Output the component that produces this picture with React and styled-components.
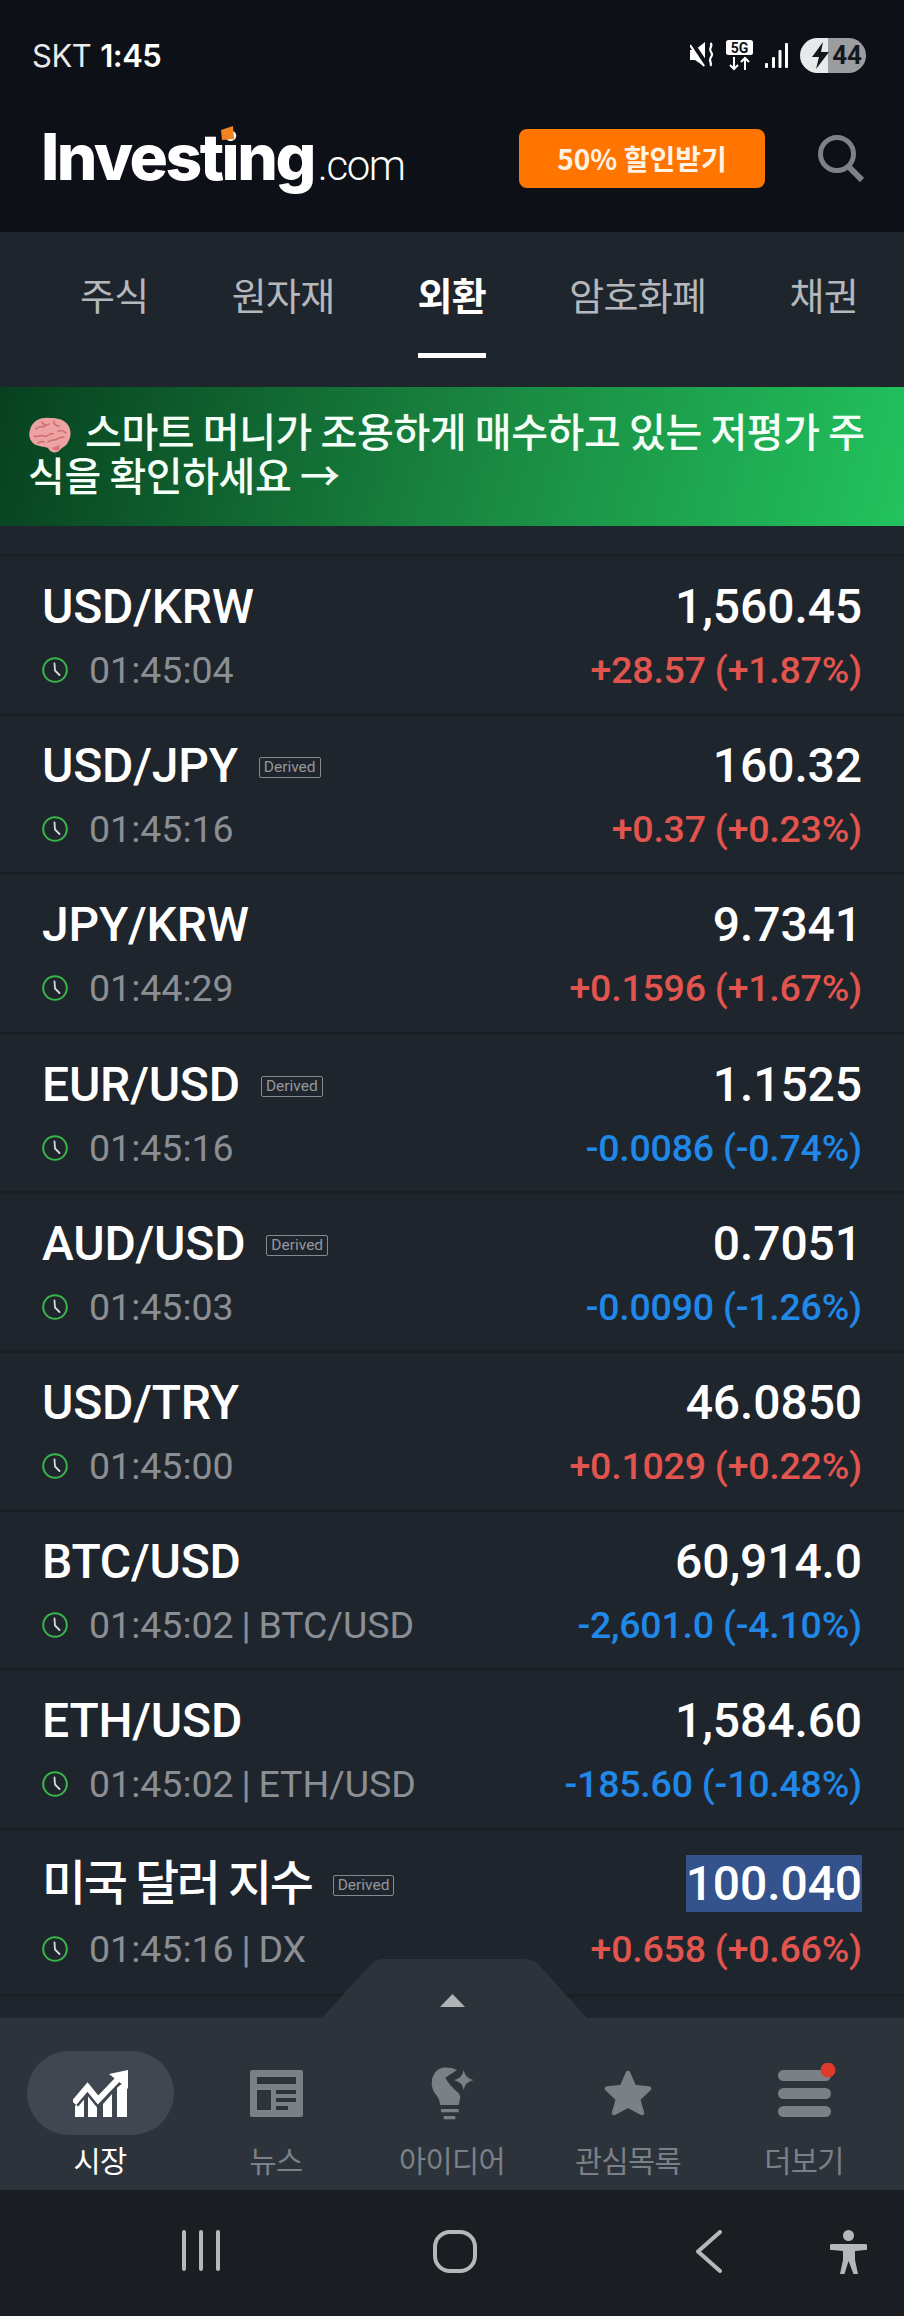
import React from "react";
import styled, { createGlobalStyle } from "styled-components";

const Global = createGlobalStyle`
  html, body { margin: 0; padding: 0; background: #1f252d; }
  * { box-sizing: border-box; }
`;
const SANS = `Roboto, "Noto Sans CJK KR", sans-serif`;
const KR = `"Noto Sans CJK KR", Roboto, sans-serif`;

const Page = styled.div`
  width: 904px; height: 2316px; display: flex; flex-direction: column;
  overflow: hidden; background: #1f252d; font-family: ${SANS}; color: #fff;
`;
const Top = styled.div`background: #0d1117; flex: none;`;
const StatusBar = styled.div`
  height: 100px; padding: 10px 38px 0 32px; display: flex; align-items: center; justify-content: space-between;
`;
const Carrier = styled.div`
  font: 400 31px/1 "Inter", sans-serif; color: #e9e9e9; letter-spacing: -0.5px;
  b { font-weight: 600; color: #fff; margin-left: 9px; }
`;
const StatusIcons = styled.div`display: flex; align-items: center; gap: 12px;`;
const Battery = styled.div`
  width: 66px; height: 35px; border-radius: 18px; display: flex; align-items: center; justify-content: flex-end;
  padding-right: 4px; gap: 1px;
  background: linear-gradient(90deg, #e8e9ea 0 28px, #9b9da0 28px);
  color: #14181d; font: 700 26px/1 "Roboto", sans-serif; 
`;
const Header = styled.div`
  height: 132px; padding: 0 40px 16px 41px; display: flex; align-items: center; position: relative;
`;
const Logo = styled.div`
  position: relative; display: flex; align-items: baseline; height: 70px; margin: -3px auto 0 0;
`;
const LogoMain = styled.span`
  font: 800 64px/70px Inter, sans-serif; letter-spacing: -2.5px; color: #fff;
`;
const LogoCom = styled.span`
  font: 300 42px/70px Roboto, sans-serif; letter-spacing: -1.4px; color: #fff; margin-left: 4px;
`;
const LogoMark = styled.svg`position: absolute; left: 180px; top: 4px;`;
const Promo = styled.div`
  width: 246px; height: 59px; border-radius: 8px; background: #ff7500; color: #fff3e6;
  display: flex; align-items: center; justify-content: center; font: 700 28px/1 ${KR}; margin-right: 53px;
`;
const Tabs = styled.div`
  flex: none; height: 155px; display: flex; gap: 83px; padding-left: 80px; white-space: nowrap; overflow: hidden;
`;
const Tab = styled.div`
  height: 126px; padding-top: 39px; font: ${p => (p.$active ? 700 : 400)} 38px/46px ${KR};
  letter-spacing: -0.65px; color: ${p => (p.$active ? "#fff" : "#b4b8bc")};
  border-bottom: 5px solid ${p => (p.$active ? "#fff" : "transparent")};
`;
const Banner = styled.div`
  flex: none; height: 139px; padding: 22px 30px 0 28px;
  background: linear-gradient(105deg, #07401f 0%, #1a8a42 55%, #22c35e 100%);
  font: 500 40px/43px ${KR}; letter-spacing: -0.4px; color: #f4fff7;
`;
const Brain = styled.svg`vertical-align: -6px; margin-right: 13px;`;
const List = styled.div`flex: 1; min-height: 0; padding-top: 28px;`;
const Row = styled.div`
  height: ${p => (p.$tall ? 169 : 159.2)}px; border-top: 3px solid #1a1f25; padding: ${p => (p.$tall ? 23 : 20)}px 42px 0 42px;
  ${p => p.$tall && "border-bottom: 3px solid #1a1f25;"}
`;
const Line = styled.div`display: flex; justify-content: space-between; align-items: center;`;
const TitleWrap = styled.div`display: flex; align-items: center; gap: ${p => (p.$tall ? 21 : 21)}px;`;
const Title = styled.div`
  font: 500 48px/60px ${SANS}; letter-spacing: ${p => (p.$tall ? -2.4 : -0.2)}px; color: #fff;
`;
const Badge = styled.div`
  border: 1.5px solid #868a90; border-radius: 2px; font: 400 15.5px/18px Roboto, sans-serif; color: #93979c;
  padding: 0 4px; height: 21px; margin-top: 3px;
`;
const Value = styled.div`
  font: 500 48px/${p => (p.$sel ? 57 : 60)}px Roboto, sans-serif; color: #fff; letter-spacing: -0.1px;
  ${p => p.$sel && "background:#34528c;"}
`;
const SubLine = styled(Line)`margin-top: ${p => (p.$tall ? 13 : 11)}px; height: 44px;`;
const TimeWrap = styled.div`display: flex; align-items: center; gap: 21px;`;
const Time = styled.div`font: 400 37.5px/44px Roboto, sans-serif; color: #8b8f94; word-spacing: -1.5px;`;
const Change = styled.div`
  font: 500 37.5px/44px Roboto, sans-serif; letter-spacing: -0.22px; color: ${p => (p.$up ? "#e2554e" : "#1f88e8")};
`;
const Nav = styled.div`
  flex: none; height: 172px; background: #2d333b; position: relative; padding: 0 12px;
  display: grid; grid-template-columns: repeat(5, 1fr);
`;
const Notch = styled.svg`position: absolute; left: 322px; bottom: 100%; display: block;`;
const NavItem = styled.div`
  display: flex; flex-direction: column; align-items: center; height: 172px; position: relative;
`;
const IconBox = styled.div`
  margin-top: 33px; width: 147px; height: 84px; border-radius: 42px; display: flex; align-items: center; justify-content: center;
  background: ${p => (p.$active ? "#414750" : "transparent")};
`;
const NavLabel = styled.div`
  margin-top: 4px; font: 400 29.5px/40px ${KR}; letter-spacing: -0.6px; color: ${p => (p.$active ? "#fff" : "#7b8087")};
`;
const SysBar = styled.div`
  flex: none; height: 126px; background: #1a1e23; display: flex; align-items: flex-start; position: relative; padding-top: 40px;
`;
const SysSlot = styled.div`
  position: absolute; top: 40px; left: ${p => p.$x}px; display: flex;
`;

const rows = [
  ["USD/KRW", 0, "01:45:04", "1,560.45", "+28.57 (+1.87%)", 1],
  ["USD/JPY", 1, "01:45:16", "160.32", "+0.37 (+0.23%)", 1],
  ["JPY/KRW", 0, "01:44:29", "9.7341", "+0.1596 (+1.67%)", 1],
  ["EUR/USD", 1, "01:45:16", "1.1525", "-0.0086 (-0.74%)", 0],
  ["AUD/USD", 1, "01:45:03", "0.7051", "-0.0090 (-1.26%)", 0],
  ["USD/TRY", 0, "01:45:00", "46.0850", "+0.1029 (+0.22%)", 1],
  ["BTC/USD", 0, "01:45:02 | BTC/USD", "60,914.0", "-2,601.0 (-4.10%)", 0],
  ["ETH/USD", 0, "01:45:02 | ETH/USD", "1,584.60", "-185.60 (-10.48%)", 0],
  ["미국 달러 지수", 1, "01:45:16 | DX", "100.040", "+0.658 (+0.66%)", 1, true],
];

const Clock = () => (
  <svg width="26" height="26" viewBox="0 0 26 26" fill="none">
    <circle cx="13" cy="13" r="11.8" stroke="#3ab54a" strokeWidth="2" />
    <path d="M12.5 6.5 L13 13.5 L17.5 18" stroke="#d8dadc" strokeWidth="1.8" strokeLinecap="round" />
  </svg>
);
const Mute = () => (
  <svg width="24" height="26" viewBox="0 0 24 26" fill="#fff">
    <path d="M0 8h5l10-8v25L5 18H0z" />
    <path d="M1 0 L17 24" stroke="#0d1117" strokeWidth="5" />
    <path d="M0 3 L14 24" stroke="#fff" strokeWidth="2.2" />
    <path d="M20.5 1c3 3-2 5 0 8s2 4 0 7 2 5 0 8" stroke="#fff" strokeWidth="2.2" fill="none" />
  </svg>
);
const FiveG = () => (
  <svg width="27" height="31" viewBox="0 0 27 31">
    <rect x="0" y="0" width="27" height="15" rx="2.5" fill="#fff" />
    <text x="13.5" y="12.5" textAnchor="middle" fontFamily="Roboto" fontWeight="700" fontSize="14" fill="#0d1117">5G</text>
    <path d="M8 17v12M4 25l4 4 4-4M19 30V18M15 22l4-4 4 4" stroke="#fff" strokeWidth="2" fill="none" />
  </svg>
);
const Signal = () => (
  <svg width="23" height="25" viewBox="0 0 23 25" fill="#fff">
    <rect x="0" y="20" width="3" height="5" rx="1" />
    <rect x="7" y="14" width="3" height="11" rx="1" />
    <rect x="13.5" y="7" width="3" height="18" rx="1" />
    <rect x="20" y="0" width="3" height="25" rx="1" />
  </svg>
);
const Search = () => (
  <svg width="46" height="47" viewBox="0 0 46 47" fill="none">
    <circle cx="19" cy="19" r="16.5" stroke="#7c8287" strokeWidth="5" />
    <path d="M30 31 L44 45" stroke="#7c8287" strokeWidth="6" />
  </svg>
);
const BrainIcon = () => (
  <Brain width="44" height="36" viewBox="0 0 44 36">
    <path d="M22 1C14 0 6 3 3 10c-3 7-2 13 3 17 5 3 10 2 14 4 2 5 9 6 12 2 2-3 5-3 7-6 4-6 5-13 1-19C36 2 29 1 22 1z" fill="#eda3a3" />
    <path d="M8 12c3-4 6-1 9-3M6 19c4 2 6-2 10 0s5-4 9-2M14 5c1 3 5 4 7 2M26 4c-1 3 2 5 5 5M30 14c3-1 6 0 8 2M20 25c3-3 6-1 9-3s4-2 7-2M10 26c2-1 4-2 6-1" stroke="#cf6f6e" strokeWidth="1.6" fill="none" strokeLinecap="round" />
    <path d="M24 31c2 3 6 3 8 1l-1-4z" fill="#d87577" />
  </Brain>
);
const ChartIcon = () => (
  <svg width="55" height="47" viewBox="0 0 55 47">
    <g fill="#fff">
      <path d="M2 47V36l9-9v20z" />
      <path d="M15 47V24l9 12v11z" />
      <path d="M30 47V34l9-10v23z" />
      <path d="M44 47V17l10-6v36z" />
    </g>
    <path d="M1 33 L14.5 17 L25 30 L46 8" stroke="#414750" strokeWidth="11" fill="none" />
    <path d="M1 33 L14.5 17 L25 30 L46 8" stroke="#fff" strokeWidth="6" fill="none" />
    <path d="M36 4 L55 0 L55 19 Z" fill="#fff" />
  </svg>
);
const NewsIcon = () => (
  <svg width="53" height="47" viewBox="0 0 53 47">
    <rect width="53" height="47" rx="2" fill="#7b8087" />
    <g fill="#2d333b">
      <rect x="7" y="7" width="39" height="7" />
      <rect x="7" y="20" width="14" height="20" />
      <rect x="26" y="20" width="20" height="4" />
      <rect x="26" y="28" width="20" height="4" />
      <rect x="26" y="36" width="12" height="4" />
    </g>
  </svg>
);
const BulbIcon = () => (
  <svg width="43" height="53" viewBox="0 0 43 53" fill="#7b8087">
    <path d="M11 .7Q20 0 26 3L14.300 10.700Q18 18 27.700 26.300Q30 30 29 32L27.700 38H9.300Q9 33 6 29Q.5 23 .7 16Q1 4 11 .7z" />
    <rect x="10" y="42" width="17.700" height="3.300" />
    <rect x="12.700" y="49" width="11.600" height="3.300" />
    <path d="M32.700 3Q34 11 42.500 13Q34 15 32.700 23Q31.400 15 23 13Q31.400 11 32.700 3z" />
  </svg>
);
const StarIcon = () => (
  <svg width="48" height="46" viewBox="0 0 48 46">
    <path d="M24 3 L30 17 L45 18.5 L34 29 L38 43 L24 35.5 L10 43 L14 29 L3 18.5 L18 17 Z" fill="#7b8087" stroke="#7b8087" strokeWidth="4.5" strokeLinejoin="round" />
  </svg>
);
const MoreIcon = () => (
  <svg width="70" height="60" viewBox="0 0 70 60">
    <g fill="#7b8087">
      <rect x="9" y="7" width="53" height="11" rx="5.5" />
      <rect x="9" y="25" width="53" height="11" rx="5.5" />
      <rect x="9" y="43" width="53" height="11" rx="5.5" />
    </g>
    <circle cx="59" cy="7" r="7.5" fill="#de3b2a" />
  </svg>
);

const navs = [
  ["시장", <ChartIcon />, true],
  ["뉴스", <NewsIcon />],
  ["아이디어", <BulbIcon />],
  ["관심목록", <StarIcon />],
  ["더보기", <MoreIcon />],
];

export default function App() {
  return (
    <Page>
      <Global />
      <Top>
        <StatusBar>
          <Carrier>SKT<b>1:45</b></Carrier>
          <StatusIcons>
            <Mute /><FiveG /><Signal />
            <Battery>
              <svg width="20" height="27" viewBox="0 0 20 27" fill="#14181d"><path d="M12 0 L1 15h7l-3 12 13-17h-8z" /></svg>
              <span>44</span>
            </Battery>
          </StatusIcons>
        </StatusBar>
        <Header>
          <Logo>
            <LogoMain>Investing</LogoMain><LogoCom>.com</LogoCom>
            <LogoMark width="13" height="14" viewBox="0 0 13 14"><path d="M0 4 L12 0 L13 13 L1 14Z" fill="#f58220" /></LogoMark>
          </Logo>
          <Promo>50% 할인받기</Promo>
          <Search />
        </Header>
      </Top>
      <Tabs>
        {["주식", "원자재", "외환", "암호화폐", "채권"].map(t => (
          <Tab key={t} $active={t === "외환"}>{t}</Tab>
        ))}
      </Tabs>
      <Banner><BrainIcon />스마트 머니가 조용하게 매수하고 있는 저평가 주<br />식을 확인하세요 →</Banner>
      <List>
        {rows.map(([name, derived, time, value, change, up, tall]) => (
          <Row key={name} $tall={tall}>
            <Line>
              <TitleWrap $tall={tall}>
                <Title $tall={tall}>{name}</Title>
                {derived ? <Badge>Derived</Badge> : null}
              </TitleWrap>
              <Value $sel={tall}>{value}</Value>
            </Line>
            <SubLine $tall={tall}>
              <TimeWrap><Clock /><Time>{time}</Time></TimeWrap>
              <Change $up={up}>{change}</Change>
            </SubLine>
          </Row>
        ))}
      </List>
      <Nav>
        <Notch width="265" height="59" viewBox="0 0 265 59">
          <path d="M0 59 L47 7 Q53 0 62 0 H203 Q212 0 218 7 L265 59 Z" fill="#2d333b" />
          <path d="M118 48 L130.500 35 L143 48 Z" fill="#b0b3b5" />
        </Notch>
        {navs.map(([label, icon, active]) => (
          <NavItem key={label}>
            <IconBox $active={active}>{icon}</IconBox>
            <NavLabel $active={active}>{label}</NavLabel>
          </NavItem>
        ))}
      </Nav>
      <SysBar>
        <SysSlot $x={182}>
          <svg width="38" height="41" viewBox="0 0 38 41" stroke="#b5b8ba" strokeWidth="4" strokeLinecap="round"><path d="M2 2v37M19 2v37M36 2v37" /></svg>
        </SysSlot>
        <SysSlot $x={433}>
          <svg width="44" height="43" viewBox="0 0 44 43" fill="none"><rect x="2" y="2" width="40" height="39" rx="15" stroke="#b5b8ba" strokeWidth="4" /></svg>
        </SysSlot>
        <SysSlot $x={695}>
          <svg width="27" height="43" viewBox="0 0 27 43" fill="none"><path d="M25 2 L3 21.500 L25 41" stroke="#b5b8ba" strokeWidth="4" strokeLinecap="round" strokeLinejoin="round" /></svg>
        </SysSlot>
        <SysSlot $x={830}>
          <svg width="37" height="46" viewBox="0 0 37 46" fill="#b5b8ba"><circle cx="18.500" cy="5.500" r="5.500" /><path d="M2 14h33a2.500 2.500 0 0 1 0 6l-10 1v9l3 14h-4.500L18.500 31 14.500 44H10l3-14v-9L2 20a2.500 2.500 0 0 1 0-6z" /></svg>
        </SysSlot>
      </SysBar>
    </Page>
  );
}
